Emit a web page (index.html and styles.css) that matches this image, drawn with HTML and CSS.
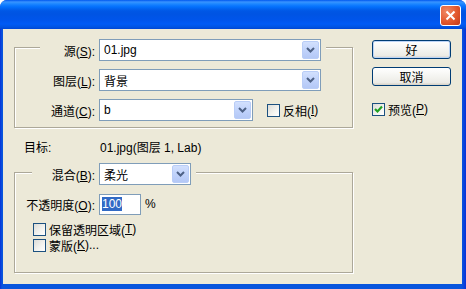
FILE: index.html
```html
<!DOCTYPE html>
<html lang="zh-CN">

<head>
  <meta charset="UTF-8">
  <title>应用图像</title>
  <link rel="stylesheet" href="styles.css">
</head>

<body>
  <div class="window">
    <div class="titlebar">
      <div class="close-btn">
        <svg width="19" height="19" viewBox="0 0 19 19"><path d="M5.5 5.5 L13.5 13.5 M13.5 5.5 L5.5 13.5" stroke="#fff" stroke-width="2" fill="none"/></svg>
      </div>
    </div>
    <div class="client">
      <div class="main">
        <div class="group group-src">
          <div class="row head head-src">
            <span class="lbl">源(<u>S</u>):</span>
            <div class="combo combo-wide">
              <span class="combo-text">01.jpg</span>
              <span class="combo-btn"><svg width="9" height="6" viewBox="0 0 9 6"><path d="M1 1 L4.5 4.5 L8 1" stroke="#4d6185" stroke-width="2" fill="none"/></svg></span>
            </div>
          </div>
          <div class="row">
            <span class="lbl lbl-full">图层(<u>L</u>):</span>
            <div class="combo combo-wide">
              <span class="combo-text">背景</span>
              <span class="combo-btn"><svg width="9" height="6" viewBox="0 0 9 6"><path d="M1 1 L4.5 4.5 L8 1" stroke="#4d6185" stroke-width="2" fill="none"/></svg></span>
            </div>
          </div>
          <div class="row">
            <span class="lbl lbl-full">通道(<u>C</u>):</span>
            <div class="combo combo-mid">
              <span class="combo-text">b</span>
              <span class="combo-btn"><svg width="9" height="6" viewBox="0 0 9 6"><path d="M1 1 L4.5 4.5 L8 1" stroke="#4d6185" stroke-width="2" fill="none"/></svg></span>
            </div>
            <label class="check check-invert"><span class="box"></span>反相(<u>I</u>)</label>
          </div>
        </div>

        <div class="target">
          <span class="target-lbl">目标:</span>
          <span>01.jpg(图层 1, Lab)</span>
        </div>

        <div class="group group-blend">
          <div class="row head head-blend">
            <span class="lbl">混合(<u>B</u>):</span>
            <div class="combo combo-small">
              <span class="combo-text">柔光</span>
              <span class="combo-btn"><svg width="9" height="6" viewBox="0 0 9 6"><path d="M1 1 L4.5 4.5 L8 1" stroke="#4d6185" stroke-width="2" fill="none"/></svg></span>
            </div>
          </div>
          <div class="row row-opacity">
            <span class="lbl lbl-full">不透明度(<u>O</u>):</span>
            <div class="field"><span class="sel">100</span></div>
            <span class="pct">%</span>
          </div>
          <label class="check check-row"><span class="box"></span>保留透明区域(<u>T</u>)</label>
          <label class="check check-row"><span class="box"></span>蒙版(<u>K</u>)...</label>
        </div>
      </div>

      <div class="side">
        <div class="btn btn-default">好</div>
        <div class="btn">取消</div>
        <label class="check check-preview">
          <span class="box checked"><svg width="11" height="11" viewBox="0 0 11 11"><path d="M2 5 L4.5 7.5 L9 2.5" stroke="#21a121" stroke-width="2.2" fill="none"/></svg></span>预览(<u>P</u>)
        </label>
      </div>
    </div>
  </div>
</body>

</html>
```

FILE: styles.css
```css
body {
  margin: 0;
  background: #fff;
  font-family: "Liberation Sans", "Noto Sans CJK SC", sans-serif;
  font-size: 12px;
  color: #000;
}

.window {
  width: 466px;
  height: 289px;
  background: linear-gradient(90deg, #0831d9 0, #0855dd 2px, #0855dd 462px, #0831d9 466px);
  border-radius: 7px 7px 0 0;
  overflow: hidden;
}

.titlebar {
  height: 29px;
  display: flex;
  justify-content: flex-end;
  align-items: flex-start;
  padding-right: 5px;
  box-sizing: border-box;
  background: linear-gradient(180deg, #0058ee 0, #3a93ff 2px, #288eff 3px, #127dff 5px, #036ffc 7px, #0262ee 9px, #0057e5 11px, #0054e3 14px, #0055eb 20px, #005bf5 24px, #0054e3 27px, #0046d5 29px);
}

.close-btn {
  margin-top: 5px;
  width: 21px;
  height: 21px;
  box-sizing: border-box;
  border: 1px solid #fff;
  border-radius: 3px;
  background: radial-gradient(circle at 30% 30%, #f08a66 0, #e2582d 55%, #c2391a 100%);
  display: flex;
  align-items: center;
  justify-content: center;
}

.client {
  margin: 0 4px 0 3px;
  height: 255px;
  background: #ece9d8;
  display: flex;
}

.main {
  width: 350px;
  padding-left: 11px;
  box-sizing: border-box;
}

/* group box, etched */
.group {
  width: 339px;
  box-sizing: border-box;
  border: 1px solid #aca899;
  box-shadow: inset 1px 1px 0 #fff, 1px 1px 0 #fff;
}

.group-src {
  margin-top: 18px;
  padding-bottom: 6px;
}

.group-blend {
  margin-top: 18px;
  padding-bottom: 19px;
}

.row {
  display: flex;
  align-items: center;
  height: 22px;
  margin-top: 8px;
}

.head {
  width: fit-content;
  background: #ece9d8;
  padding-right: 5px;
}

.head-src {
  margin-top: -9px;
  margin-left: 25px;
}

.head-src .lbl {
  width: 55px;
}

.head-blend {
  margin-top: -10px;
  margin-left: 17px;
}

.head-blend .lbl {
  width: 63px;
}

.lbl {
  text-align: right;
  margin-right: 4px;
  white-space: nowrap;
}

.lbl-full {
  width: 80px;
}

/* combo box */
.combo {
  height: 22px;
  box-sizing: border-box;
  border: 1px solid #7f9db9;
  background: #fff;
  display: flex;
  align-items: center;
  justify-content: space-between;
  padding: 1px;
}

.combo-wide {
  width: 222px;
}

.combo-mid {
  width: 154px;
}

.combo-small {
  width: 92px;
}

.combo-text {
  padding-left: 3px;
}

.combo-btn {
  width: 17px;
  height: 18px;
  box-sizing: border-box;
  border: 1px solid #b9cdf7;
  border-radius: 2px;
  background: linear-gradient(180deg, #d2e0fd 0, #c1d3fb 50%, #b4c8f6 100%);
  display: flex;
  align-items: center;
  justify-content: center;
}

/* checkbox */
.check {
  display: flex;
  align-items: center;
  height: 16px;
  white-space: nowrap;
}

.box {
  width: 13px;
  height: 13px;
  box-sizing: border-box;
  border: 1px solid #1c5180;
  background: linear-gradient(135deg, #dcdcd7 0, #f4f4f0 60%, #fff 100%);
  margin-right: 3px;
  display: flex;
  align-items: center;
  justify-content: center;
}

.check-invert {
  margin-left: 14px;
}

.check-row {
  margin-left: 18px;
}

.row-opacity + .check-row {
  margin-top: 6px;
}

.target {
  display: flex;
  align-items: center;
  height: 16px;
  margin-top: 10px;
  padding-left: 10px;
}

.target-lbl {
  width: 76px;
}

/* text field */
.field {
  width: 42px;
  height: 21px;
  box-sizing: border-box;
  border: 1px solid #7f9db9;
  background: #fff;
  display: flex;
  align-items: center;
  padding-left: 2px;
}

.sel {
  background: #316ac5;
  color: #fff;
  line-height: 14px;
}

.pct {
  margin-left: 4px;
}

/* right column */
.side {
  margin-left: 19px;
  padding-top: 11px;
  display: flex;
  flex-direction: column;
}

.btn {
  width: 79px;
  height: 19px;
  box-sizing: border-box;
  border: 1px solid #003c74;
  border-radius: 3px;
  background: linear-gradient(180deg, #fff 0, #f4f4f0 50%, #ecebe6 85%, #d6d0c5 100%);
  display: flex;
  align-items: center;
  justify-content: center;
  margin-bottom: 8px;
}

.btn-default {
  box-shadow: inset 0 0 0 1px #bcd4f6;
}

.check-preview {
  margin-top: 7px;
}
```
